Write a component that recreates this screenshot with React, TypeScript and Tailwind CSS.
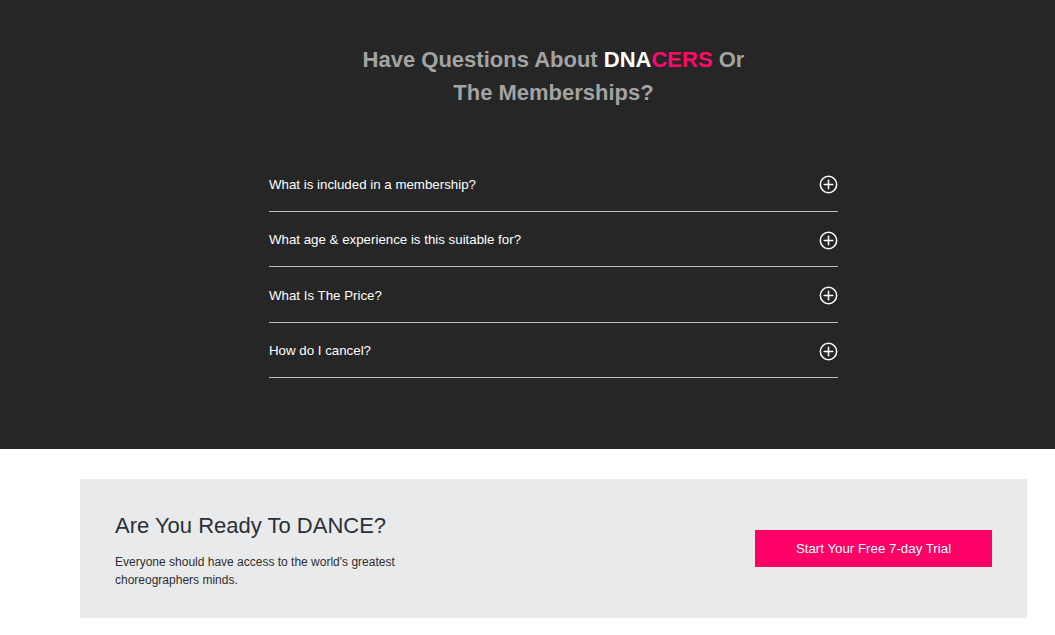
import React from 'react';

const faqs = [
  'What is included in a membership?',
  'What age & experience is this suitable for?',
  'What Is The Price?',
  'How do I cancel?',
];

function PlusCircle() {
  return (
    <svg width="19" height="19" viewBox="0 0 20 20" fill="none" stroke="white" strokeWidth="1.6">
      <circle cx="10" cy="10" r="8.6" />
      <path d="M10 5.5v9M5.5 10h9" strokeLinecap="round" />
    </svg>
  );
}

export default function App() {
  return (
    <div className="min-h-[635px] w-full overflow-x-hidden bg-white font-['Liberation_Sans',Arial,sans-serif]">
      <div className="w-[1107px]">
        <section className="bg-[#262626] pt-[43px] pb-[71px]">
          <h2 className="mx-auto w-[420px] text-center text-[22px] font-bold leading-[33px] text-[#a3a3a3]">
            Have Questions About <span className="text-white">DNA</span>
            <span className="text-[#ff0a6c]">CERS</span> Or The Memberships?
          </h2>
          <div className="mx-auto mt-[47px] w-[569px]">
            {faqs.map((q) => (
              <div
                key={q}
                className="flex h-[55.5px] items-center justify-between border-b border-[#bdbdbd] pt-[3px]"
              >
                <span className="text-[13.3px] text-white">{q}</span>
                <PlusCircle />
              </div>
            ))}
          </div>
        </section>
        <section className="px-[80px] pt-[30px] pb-[17px]">
          <div className="flex h-[139px] items-center justify-between bg-[#e9eaec] pl-[35px] pr-[35px]">
            <div className="pt-[4px]">
              <h3 className="text-[22px] leading-[28px] text-[#2b2f36]">Are You Ready To DANCE?</h3>
              <p className="mt-[13px] w-[300px] text-[12px] leading-[18px] text-[#2e2e2e]">
                Everyone should have access to the world's greatest choreographers minds.
              </p>
            </div>
            <button className="h-[37px] w-[237px] bg-[#ff0066] text-[13.3px] text-white">
              Start Your Free 7-day Trial
            </button>
          </div>
        </section>
      </div>
    </div>
  );
}
